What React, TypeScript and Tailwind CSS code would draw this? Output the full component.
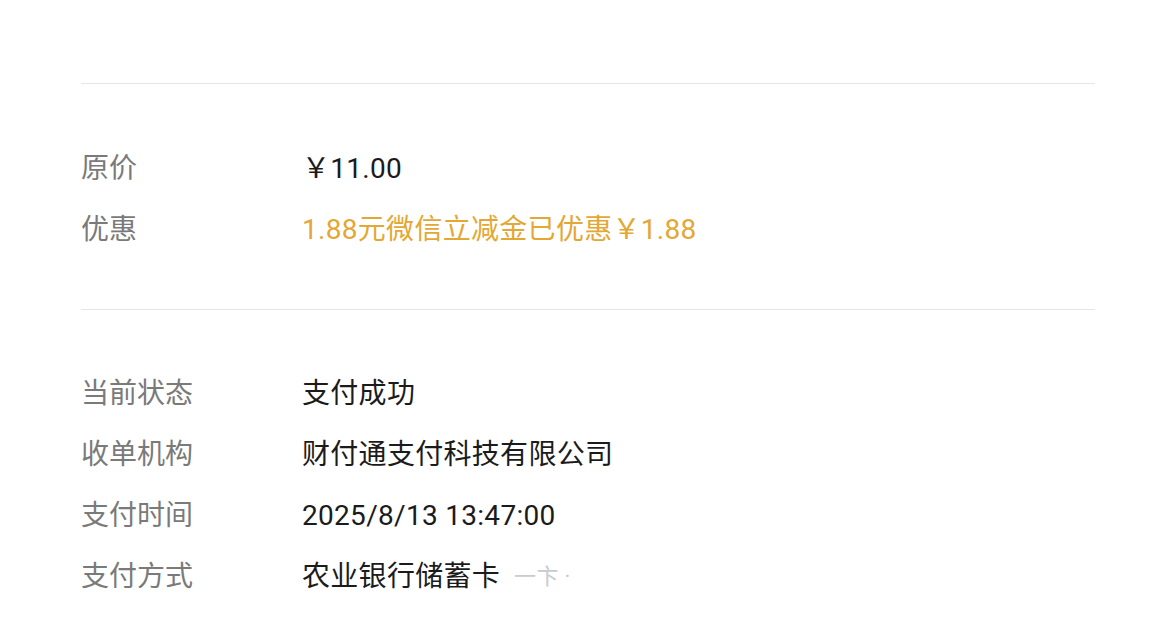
const rowsA = [
  { label: "原价", value: "￥11.00", tone: "text-[#1b1b1b]" },
  { label: "优惠", value: "1.88元微信立减金已优惠￥1.88", tone: "text-[#e4a733]" },
]

const rowsB = [
  { label: "当前状态", value: "支付成功" },
  { label: "收单机构", value: "财付通支付科技有限公司" },
  { label: "支付时间", value: "2025/8/13 13:47:00" },
]

const Row = ({ label, children }: { label: string; children: React.ReactNode }) => (
  <div className="flex items-center h-[61px]">
    <div className="w-[221px] shrink-0 text-[#7a7a7a]">{label}</div>
    <div className="flex items-center tracking-[0.3px]">{children}</div>
  </div>
)

export default function App() {
  return (
    <div
      className="min-h-[618px] w-[1176px] bg-white px-[81px] pt-[83px] text-[28px] leading-none"
      style={{ fontFamily: "Roboto, 'Noto Sans CJK SC', sans-serif" }}
    >
      <div className="border-t border-[#e6e6e6] pt-[54px] pb-[49px]">
        {rowsA.map((r) => (
          <Row key={r.label} label={r.label}>
            <span className={r.tone}>{r.value}</span>
          </Row>
        ))}
      </div>
      <div className="border-t border-[#e6e6e6] pt-[53px]">
        {rowsB.map((r) => (
          <Row key={r.label} label={r.label}>
            <span className="text-[#1b1b1b]">{r.value}</span>
          </Row>
        ))}
        <Row label="支付方式">
          <span className="text-[#1b1b1b]">农业银行储蓄卡</span>
          <span className="ml-[14px] text-[22px] text-[#c5ccd2]">一卞 ·</span>
        </Row>
      </div>
    </div>
  )
}
